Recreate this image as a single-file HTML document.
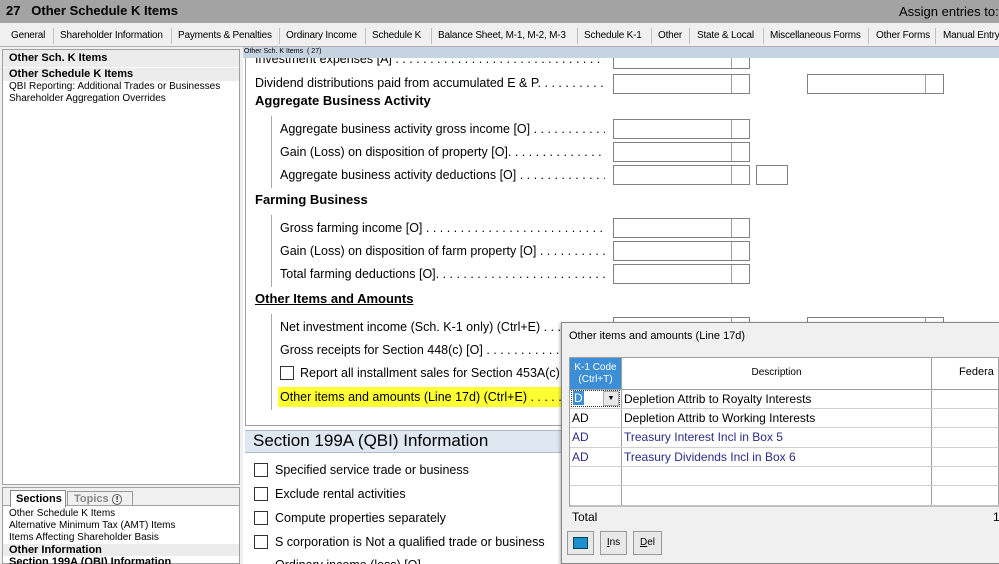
<!DOCTYPE html>
<html><head><style>
*{margin:0;padding:0;box-sizing:border-box}
html,body{width:999px;height:564px;overflow:hidden}
body{background:#f0f0f0;font-family:"Liberation Sans",sans-serif;position:relative;color:#000}
.a{position:absolute;white-space:nowrap}
.t{font-size:12.5px;overflow:hidden}
.d{width:325px}
.box{position:absolute;height:20px;border:1px solid #808080;background:#fff}
.box i{position:absolute;left:117px;top:0;bottom:0;border-left:1px solid #a0a0a0}
.cb{position:absolute;width:14px;height:14px;border:1px solid #333;background:#fff}
.vl{position:absolute;left:271px;width:1px;background:#a8a8a8}
.tab{font-size:10px;top:30px;letter-spacing:-0.2px}
.sep{position:absolute;top:28px;height:16px;border-left:1px solid #c0c0c0}
</style></head><body>
<div class="a" style="left:0;top:0;width:999px;height:23px;background:#a3a3a3"></div>
<div class="a" style="left:6px;top:3px;font-size:13px;font-weight:bold">27&nbsp;&nbsp;&nbsp;Other Schedule K Items</div>
<div class="a" style="left:899px;top:4px;font-size:13px">Assign entries to:</div>
<div class="a" style="left:0;top:23px;width:999px;height:24px;background:#f0f0f0;border-bottom:1px solid #b0b0b0"></div>
<div class="a tab" style="left:11px">General</div><div class="sep" style="left:53px"></div>
<div class="a tab" style="left:60px">Shareholder Information</div><div class="sep" style="left:171px"></div>
<div class="a tab" style="left:178px">Payments &amp; Penalties</div><div class="sep" style="left:279px"></div>
<div class="a tab" style="left:286px">Ordinary Income</div><div class="sep" style="left:365px"></div>
<div class="a tab" style="left:372px">Schedule K</div><div class="sep" style="left:431px"></div>
<div class="a tab" style="left:438px">Balance Sheet, M-1, M-2, M-3</div><div class="sep" style="left:577px"></div>
<div class="a tab" style="left:584px">Schedule K-1</div><div class="sep" style="left:651px"></div>
<div class="a tab" style="left:658px">Other</div><div class="sep" style="left:689px"></div>
<div class="a tab" style="left:697px">State &amp; Local</div><div class="sep" style="left:763px"></div>
<div class="a tab" style="left:770px">Miscellaneous Forms</div><div class="sep" style="left:868px"></div>
<div class="a tab" style="left:876px">Other Forms</div><div class="sep" style="left:935px"></div>
<div class="a tab" style="left:943px">Manual Entry</div>

<!-- left panel -->
<div class="a" style="left:2px;top:49px;width:238px;height:436px;background:#fff;border:1px solid #a0a0a0"></div>
<div class="a" style="left:3px;top:50px;width:236px;height:17px;background:#ececec"></div>
<div class="a" style="left:9px;top:52px;font-size:11px;font-weight:bold">Other Sch. K Items</div>
<div class="a" style="left:3px;top:68px;width:236px;height:13px;background:#ececec"></div>
<div class="a" style="left:9px;top:68px;font-size:11px;font-weight:bold">Other Schedule K Items</div>
<div class="a" style="left:9px;top:81px;font-size:10px">QBI Reporting: Additional Trades or Businesses</div>
<div class="a" style="left:9px;top:93px;font-size:10px">Shareholder Aggregation Overrides</div>

<div class="a" style="left:2px;top:487px;width:238px;height:77px;background:#fff;border:1px solid #a0a0a0"></div>
<div class="a" style="left:3px;top:488px;width:236px;height:18px;background:#f0f0f0;border-bottom:1px solid #a0a0a0"></div>
<div class="a" style="left:10px;top:490px;width:56px;height:17px;background:#fff;border:1px solid #888;border-bottom:none;font-size:11px;font-weight:bold;padding:2px 0 0 5px">Sections</div>
<div class="a" style="left:67px;top:491px;width:66px;height:15px;border:1px solid #999;border-bottom:none;font-size:11px;font-weight:bold;color:#888;padding:1px 0 0 6px">Topics <span style="border:1px solid #666;border-radius:50%;font-size:8px;padding:0 3px;color:#000">!</span></div>
<div class="a" style="left:9px;top:508px;font-size:10px">Other Schedule K Items</div>
<div class="a" style="left:9px;top:520px;font-size:10px">Alternative Minimum Tax (AMT) Items</div>
<div class="a" style="left:9px;top:532px;font-size:10px">Items Affecting Shareholder Basis</div>
<div class="a" style="left:3px;top:544px;width:236px;height:12px;background:#ececec"></div>
<div class="a" style="left:9px;top:544px;font-size:11px;font-weight:bold">Other Information</div>
<div class="a" style="left:9px;top:556px;font-size:11px;font-weight:bold">Section 199A (QBI) Information</div>

<!-- main -->
<div class="a" style="left:243px;top:47px;width:756px;height:517px;background:#fff"></div>
<div class="a" style="left:245px;top:58px;width:1px;height:368px;background:#a0a0a0"></div>
<div class="a" style="left:245px;top:425px;width:754px;height:1px;background:#a0a0a0"></div>
<div class="a" style="left:245px;top:430px;width:754px;height:23px;background:#dfe7f0;border-top:1px solid #b0bccc;border-bottom:1px solid #b0bccc"></div>
<div class="a" style="left:253px;top:431px;font-size:17px">Section 199A (QBI) Information</div>

<div class="a t" style="left:255px;top:52px;width:350px">Investment expenses [A] . . . . . . . . . . . . . . . . . . . . . . . . . . . . . . . . . . .</div>
<div class="box" style="left:613px;top:49px;width:137px;height:20px"><i></i></div>
<div class="a" style="left:243px;top:47px;width:756px;height:11px;background:#c6d4e2"></div>
<div class="a" style="left:244px;top:48px;font-size:7px">Other Sch. K Items&nbsp;&nbsp;( 27)</div>
<div class="a t" style="left:255px;top:76px;width:350px">Dividend distributions paid from accumulated E &amp; P. . . . . . . . . . . . . . .</div>
<div class="box" style="left:613px;top:74px;width:137px"><i></i></div>
<div class="box" style="left:807px;top:74px;width:137px"><i></i></div>
<div class="a" style="left:255px;top:93px;font-size:13px;font-weight:bold">Aggregate Business Activity</div>
<div class="vl" style="top:116px;height:72px"></div>
<div class="a t d" style="left:280px;top:122px">Aggregate business activity gross income [O] . . . . . . . . . . . . . . . .</div>
<div class="box" style="left:613px;top:119px;width:137px"><i></i></div>
<div class="a t d" style="left:280px;top:145px">Gain (Loss) on disposition of property [O]. . . . . . . . . . . . . . . . . . . .</div>
<div class="box" style="left:613px;top:142px;width:137px"><i></i></div>
<div class="a t d" style="left:280px;top:168px">Aggregate business activity deductions [O] . . . . . . . . . . . . . . . . . .</div>
<div class="box" style="left:613px;top:165px;width:137px"><i></i></div>
<div class="box" style="left:756px;top:165px;width:32px"></div>
<div class="a" style="left:255px;top:192px;font-size:13px;font-weight:bold">Farming Business</div>
<div class="vl" style="top:215px;height:72px"></div>
<div class="a t d" style="left:280px;top:221px">Gross farming income [O] . . . . . . . . . . . . . . . . . . . . . . . . . . . . . . . .</div>
<div class="box" style="left:613px;top:218px;width:137px"><i></i></div>
<div class="a t d" style="left:280px;top:244px">Gain (Loss) on disposition of farm property [O] . . . . . . . . . . . . . . .</div>
<div class="box" style="left:613px;top:241px;width:137px"><i></i></div>
<div class="a t d" style="left:280px;top:267px">Total farming deductions [O]. . . . . . . . . . . . . . . . . . . . . . . . . . . . .</div>
<div class="box" style="left:613px;top:264px;width:137px"><i></i></div>
<div class="a" style="left:255px;top:291px;font-size:13px;font-weight:bold;text-decoration:underline">Other Items and Amounts</div>
<div class="vl" style="top:314px;height:96px"></div>
<div class="a t d" style="left:280px;top:320px">Net investment income (Sch. K-1 only) (Ctrl+E) . . . . . . . . . . . .</div>
<div class="box" style="left:613px;top:317px;width:137px"><i></i></div>
<div class="box" style="left:807px;top:317px;width:137px"><i></i></div>
<div class="a t d" style="left:280px;top:343px">Gross receipts for Section 448(c) [O] . . . . . . . . . . . . . . . . . . . . .</div>
<div class="cb" style="left:280px;top:366px"></div>
<div class="a t" style="left:300px;top:366px">Report all installment sales for Section 453A(c) l</div>
<div class="a" style="left:278px;top:387px;width:290px;height:20px;background:#ffff33"></div>
<div class="a t d" style="left:280px;top:390px">Other items and amounts (Line 17d) (Ctrl+E) . . . . . . . . . . . . .</div>

<div class="cb" style="left:254px;top:463px"></div>
<div class="a t" style="left:275px;top:463px">Specified service trade or business</div>
<div class="cb" style="left:254px;top:487px"></div>
<div class="a t" style="left:275px;top:487px">Exclude rental activities</div>
<div class="cb" style="left:254px;top:511px"></div>
<div class="a t" style="left:275px;top:511px">Compute properties separately</div>
<div class="cb" style="left:254px;top:535px"></div>
<div class="a t" style="left:275px;top:535px">S corporation is Not a qualified trade or business</div>
<div class="a t" style="left:275px;top:558px">Ordinary income (loss) [O]</div>

<!-- popup -->
<div class="a" style="left:561px;top:322px;width:440px;height:242px;background:#f0f0f0;border:1px solid #888;box-shadow:-1px 1px 3px rgba(0,0,0,.3)"></div>
<div class="a" style="left:569px;top:330px;font-size:11px">Other items and amounts (Line 17d)</div>
<div class="a" style="left:569px;top:357px;width:430px;height:150px;background:#fff;border:1px solid #a0a0a0"></div>
<div class="a" style="left:570px;top:358px;width:51px;height:31px;background:#3c8fd6;color:#fff;font-size:10px;text-align:center;line-height:12px;padding-top:4px">K-1 Code<br>(Ctrl+T)</div>
<div class="a" style="left:621px;top:358px;width:1px;height:148px;background:#a0a0a0"></div>
<div class="a" style="left:931px;top:358px;width:1px;height:148px;background:#a0a0a0"></div>
<div class="a" style="left:622px;top:367px;width:309px;text-align:center;font-size:10px">Description</div>
<div class="a" style="left:959px;top:366px;font-size:11px">Federa</div>
<div class="a" style="left:570px;top:389px;width:429px;height:1px;background:#a0a0a0"></div>
<div class="a" style="left:570px;top:408px;width:429px;height:1px;background:#d0d0d0"></div>
<div class="a" style="left:570px;top:427px;width:429px;height:1px;background:#d0d0d0"></div>
<div class="a" style="left:570px;top:447px;width:429px;height:1px;background:#d0d0d0"></div>
<div class="a" style="left:570px;top:466px;width:429px;height:1px;background:#d0d0d0"></div>
<div class="a" style="left:570px;top:485px;width:429px;height:1px;background:#d0d0d0"></div>
<div class="a" style="left:570px;top:505px;width:429px;height:2px;background:#c0c0c0"></div>
<div class="a" style="left:571px;top:390px;width:49px;height:17px;border:1px dotted #333;background:#fff"></div>
<div class="a" style="left:573px;top:391px;font-size:12px;color:#fff;background:#3c8fd6;padding:0 1px">D</div>
<div class="a" style="left:603px;top:391px;width:16px;height:15px;background:#e8e8e8;border:1px solid #aaa;font-size:7px;text-align:center;line-height:14px">▼</div>
<div class="a" style="left:624px;top:392px;font-size:12px">Depletion Attrib to Royalty Interests</div>
<div class="a" style="left:572px;top:411px;font-size:12px">AD</div>
<div class="a" style="left:624px;top:411px;font-size:12px">Depletion Attrib to Working Interests</div>
<div class="a" style="left:572px;top:430px;font-size:12px;color:#2a2a8a">AD</div>
<div class="a" style="left:624px;top:430px;font-size:12px;color:#2a2a8a">Treasury Interest Incl in Box 5</div>
<div class="a" style="left:572px;top:450px;font-size:12px;color:#2a2a8a">AD</div>
<div class="a" style="left:624px;top:450px;font-size:12px;color:#2a2a8a">Treasury Dividends Incl in Box 6</div>
<div class="a" style="left:572px;top:510px;font-size:12px">Total</div>
<div class="a" style="left:993px;top:510px;font-size:12px">1</div>
<div class="a" style="left:567px;top:531px;width:27px;height:24px;border:1px solid #999;background:#e8e8e8"></div>
<div class="a" style="left:573px;top:537px;width:15px;height:12px;background:#1b8fd0;border:1px solid #045"></div>
<div class="a" style="left:600px;top:531px;width:27px;height:24px;border:1px solid #999;background:#e8e8e8;font-size:10px;text-align:center;line-height:22px"><u>I</u>ns</div>
<div class="a" style="left:633px;top:531px;width:29px;height:24px;border:1px solid #999;background:#e8e8e8;font-size:10px;text-align:center;line-height:22px"><u>D</u>el</div>
</body></html>
